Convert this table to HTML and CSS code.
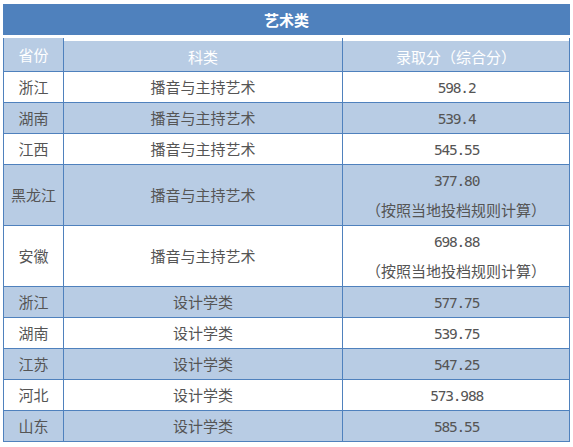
FILE: index.html
```html
<!DOCTYPE html>
<html lang="zh">
<head>
<meta charset="utf-8">
<link rel="stylesheet" href="styles.css">
</head>
<body>
<div class="wrap">
  <div class="title">艺术类</div>
  <div class="grid">
    <div class="cell head c1">省份</div>
    <div class="cell head c2">科类</div>
    <div class="cell head c3">录取分（综合分）</div>

    <div class="cell c1">浙江</div><div class="cell c2">播音与主持艺术</div><div class="cell c3"><span class="num">598.2</span></div>
    <div class="cell c1 alt">湖南</div><div class="cell c2 alt">播音与主持艺术</div><div class="cell c3 alt"><span class="num">539.4</span></div>
    <div class="cell c1">江西</div><div class="cell c2">播音与主持艺术</div><div class="cell c3"><span class="num">545.55</span></div>
    <div class="cell c1 alt tall">黑龙江</div><div class="cell c2 alt tall">播音与主持艺术</div><div class="cell c3 alt tall"><span class="num">377.80</span><span>（按照当地投档规则计算）</span></div>
    <div class="cell c1 tall">安徽</div><div class="cell c2 tall">播音与主持艺术</div><div class="cell c3 tall"><span class="num">698.88</span><span>（按照当地投档规则计算）</span></div>
    <div class="cell c1 alt">浙江</div><div class="cell c2 alt">设计学类</div><div class="cell c3 alt"><span class="num">577.75</span></div>
    <div class="cell c1">湖南</div><div class="cell c2">设计学类</div><div class="cell c3"><span class="num">539.75</span></div>
    <div class="cell c1 alt">江苏</div><div class="cell c2 alt">设计学类</div><div class="cell c3 alt"><span class="num">547.25</span></div>
    <div class="cell c1">河北</div><div class="cell c2">设计学类</div><div class="cell c3"><span class="num">573.988</span></div>
    <div class="cell c1 alt">山东</div><div class="cell c2 alt">设计学类</div><div class="cell c3 alt"><span class="num">585.55</span></div>
  </div>
</div>
</body>
</html>
```
FILE: styles.css
```css
html, body {
  margin: 0;
  padding: 0;
  background: #ffffff;
}
body {
  font-family: "Noto Sans CJK SC", "Noto Sans", sans-serif;
  font-size: 15px;
  color: #555555;
}
.wrap {
  width: 567px;
  margin: 4px 0 0 3px;
}
.title {
  height: 31px;
  background: #4f81bd;
  color: #ffffff;
  font-weight: bold;
  display: flex;
  align-items: center;
  justify-content: center;
  line-height: 1;
}
.grid {
  display: grid;
  grid-template-columns: 61px 279px 227px;
  grid-template-rows: 37px repeat(3, 31px) repeat(2, 61px) repeat(5, 31px);
}
.cell {
  box-sizing: border-box;
  border-right: 1px solid #4f81bd;
  border-bottom: 1px solid #4f81bd;
  display: flex;
  flex-direction: column;
  align-items: center;
  justify-content: center;
  line-height: 30px;
  white-space: nowrap;
}
.c1 {
  border-left: 1px solid #4f81bd;
}
.alt {
  background: #b8cce4;
}
.head {
  align-self: end;
  height: 34px;
  color: #ffffff;
  background: #b8cce4;
  padding-top: 1px;
}
.head.c2, .head.c3 {
  background: linear-gradient(to bottom, #ffffff 0, #ffffff 3px, #b8cce4 3px);
  padding-top: 4px;
}
.num {
  display: block;
  height: 30px;
  font-family: "DejaVu Sans Mono", monospace;
  font-size: 14.5px;
  letter-spacing: -1.2px;
  text-indent: 1.2px;
  line-height: 32px;
}
```
